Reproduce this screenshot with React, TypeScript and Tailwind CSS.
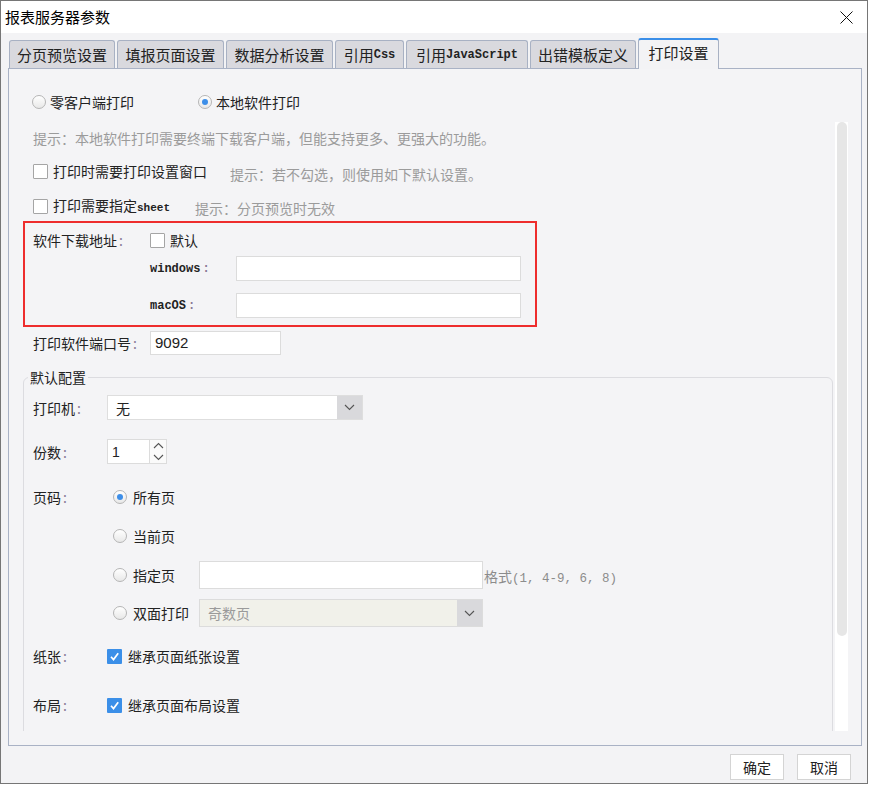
import React from "react";

const Radio = ({ on = false }: { on?: boolean }) => (
  <span className="flex h-[14px] w-[14px] shrink-0 items-center justify-center rounded-full border border-[#b5b5b5] bg-linear-to-b from-white to-[#e8e8e8]">
    {on && <span className="h-[6px] w-[6px] rounded-full bg-[#3d8ee8]" />}
  </span>
);

const Check = ({ on = false }: { on?: boolean }) =>
  on ? (
    <span className="flex h-[15px] w-[15px] shrink-0 items-center justify-center rounded-[1px] bg-[#3b8fe8]">
      <svg width="11" height="11" viewBox="0 0 11 11">
        <path d="M2 5.8 L4.5 8.6 L9.2 2.2" stroke="#fff" strokeWidth="1.7" fill="none" />
      </svg>
    </span>
  ) : (
    <span className="h-[15px] w-[15px] shrink-0 rounded-[1px] border border-[#a5a5a5] bg-white" />
  );

const Chevron = ({ up = false }: { up?: boolean }) => (
  <svg width="11" height="7" viewBox="0 0 11 7">
    <path d={up ? "M1 6 L5.5 1.5 L10 6" : "M1 1 L5.5 5.5 L10 1"} stroke="#555" strokeWidth="1.1" fill="none" />
  </svg>
);

const Colon = () => <span className="ml-[2px] text-[#8a7a96]">:</span>;

const mono = "font-['Liberation_Mono',monospace] font-bold";

export default function App() {
  return (
    <div className="min-h-screen bg-white">
      <div className="flex h-[784px] w-[868px] flex-col border border-[#767676] bg-[#f3f3f5] font-['Noto_Sans_CJK_SC',sans-serif] text-[#222]">
        {/* title bar */}
        <div className="flex h-[32px] shrink-0 items-center justify-between bg-white pl-[4px] pr-[14px]">
          <span className="text-[15px] leading-[20px] text-black">报表服务器参数</span>
          <svg width="13" height="13" viewBox="0 0 13 13">
            <path d="M0.5 0.5 L12.5 12.5 M12.5 0.5 L0.5 12.5" stroke="#111" strokeWidth="1" />
          </svg>
        </div>

        {/* tabs */}
        <div className="flex h-[35px] shrink-0 items-end gap-[2px] pl-[8px] text-[15px] leading-[20px]">
          <div className="flex h-[28px] w-[106px] items-center justify-center rounded-t-[3px] border border-b-0 border-[#a8b1c3] bg-[#d9d9de]">分页预览设置</div>
          <div className="flex h-[28px] w-[107px] items-center justify-center rounded-t-[3px] border border-b-0 border-[#a8b1c3] bg-[#d9d9de]">填报页面设置</div>
          <div className="flex h-[28px] w-[107px] items-center justify-center rounded-t-[3px] border border-b-0 border-[#a8b1c3] bg-[#d9d9de]">数据分析设置</div>
          <div className="flex h-[28px] w-[69px] items-center justify-center rounded-t-[3px] border border-b-0 border-[#a8b1c3] bg-[#d9d9de]">
            引用<span className={`${mono} text-[12px]`}>Css</span>
          </div>
          <div className="flex h-[28px] w-[122px] items-center justify-center rounded-t-[3px] border border-b-0 border-[#a8b1c3] bg-[#d9d9de]">
            引用<span className={`${mono} text-[12px]`}>JavaScript</span>
          </div>
          <div className="flex h-[28px] w-[106px] items-center justify-center rounded-t-[3px] border border-b-0 border-[#a8b1c3] bg-[#d9d9de]">出错模板定义</div>
          <div className="relative z-10 -mb-px flex h-[31px] w-[81px] items-center justify-center rounded-t-[3px] border-x border-t-2 border-x-[#a8b1c3] border-t-[#3a8ee8] bg-[#f3f3f5] pb-[3px]">打印设置</div>
        </div>

        {/* panel */}
        <div className="ml-[7px] h-[678px] w-[854px] shrink-0 border border-[#a9b2c5] bg-[#f4f4f6]">
          <div className="flex h-[662px]">
            <div className="h-full w-[826px] overflow-hidden pl-[14px] text-[14px] leading-[20px]">
              <div className="mt-[21px] flex h-[24px] items-center pl-[9px]">
                <div className="flex w-[166px] items-center gap-[4px]">
                  <Radio />
                  <span>零客户端打印</span>
                </div>
                <div className="flex items-center gap-[4px]">
                  <Radio on />
                  <span>本地软件打印</span>
                </div>
              </div>

              <div className="mt-[12px] flex h-[24px] items-center pl-[10px] text-[#9b9b9b]">
                提示：本地软件打印需要终端下载客户端，但能支持更多、更强大的功能。
              </div>

              <div className="mt-[9px] flex h-[24px] items-center pl-[10px]">
                <div className="flex w-[197px] items-center gap-[5px]">
                  <Check />
                  <span>打印时需要打印设置窗口</span>
                </div>
                <span className="mt-[6px] text-[#9b9b9b]">提示：若不勾选，则使用如下默认设置。</span>
              </div>

              <div className="mt-[11px] flex h-[24px] items-center pl-[10px]">
                <div className="flex w-[162px] items-center gap-[5px]">
                  <Check />
                  <span>
                    打印需要指定<span className={`${mono} text-[11px]`}>sheet</span>
                  </span>
                </div>
                <span className="mt-[4px] text-[#9b9b9b]">提示：分页预览时无效</span>
              </div>

              {/* download address */}
              <div className="mt-[3px] w-[514px] border-2 border-[#ee2d2d] pb-[7px] pl-[8px] pt-[5px]">
                <div className="flex h-[24px] items-center">
                  <span className="w-[117px]">
                    软件下载地址<Colon />
                  </span>
                  <Check />
                  <span className="ml-[5px]">默认</span>
                </div>
                <div className="mt-[4px] flex items-center pl-[117px]">
                  <span className={`w-[86px] ${mono} text-[12px]`}>
                    windows<Colon />
                  </span>
                  <div className="h-[25px] w-[285px] border border-[#dcdcdc] bg-white" />
                </div>
                <div className="mt-[12px] flex items-center pl-[117px]">
                  <span className={`w-[86px] ${mono} text-[12px]`}>
                    macOS<Colon />
                  </span>
                  <div className="h-[25px] w-[285px] border border-[#dcdcdc] bg-white" />
                </div>
              </div>

              <div className="mt-[4px] flex h-[24px] items-center pl-[10px]">
                <span className="w-[117px]">
                  打印软件端口号<Colon />
                </span>
                <div className="flex h-[24px] w-[131px] items-center border border-[#dcdcdc] bg-white pl-[4px] font-['Liberation_Sans',sans-serif] text-[15px]">
                  9092
                </div>
              </div>

              {/* default config */}
              <fieldset className="mt-[12px] h-[420px] w-[810px] rounded-t-[6px] border border-[#dcdce0]">
                <legend className="ml-[4px] px-[2px] leading-[20px]">默认配置</legend>
                <div className="pl-[9px] pt-[8px]">
                  <div className="flex h-[25px] items-center">
                    <span className="w-[74px]">
                      打印机<Colon />
                    </span>
                    <div className="flex h-[25px] w-[256px] border border-[#dedede] bg-white">
                      <span className="flex flex-1 items-center pl-[8px]">无</span>
                      <span className="flex w-[25px] items-center justify-center bg-[#d9d9dc]">
                        <Chevron />
                      </span>
                    </div>
                  </div>

                  <div className="mt-[19px] flex h-[25px] items-center">
                    <span className="w-[74px]">
                      份数<Colon />
                    </span>
                    <div className="flex h-[25px] w-[43px] items-center border border-[#dcdcdc] bg-white pl-[4px] font-['Liberation_Sans',sans-serif]">
                      1
                    </div>
                    <div className="flex h-[25px] w-[17px] flex-col border-y border-r border-[#dcdcdc] bg-[#fafafa]">
                      <span className="flex flex-1 items-center justify-center">
                        <Chevron up />
                      </span>
                      <span className="flex flex-1 items-center justify-center">
                        <Chevron />
                      </span>
                    </div>
                  </div>

                  <div className="mt-[19px] flex">
                    <span className="flex h-[28px] w-[74px] items-center">
                      页码<Colon />
                    </span>
                    <div className="pl-[6px]">
                      <div className="flex h-[28px] items-center gap-[6px]">
                        <Radio on />
                        <span>所有页</span>
                      </div>
                      <div className="mt-[11px] flex h-[28px] items-center gap-[6px]">
                        <Radio />
                        <span>当前页</span>
                      </div>
                      <div className="mt-[11px] flex h-[28px] items-center">
                        <div className="flex w-[86px] items-center gap-[6px]">
                          <Radio />
                          <span>指定页</span>
                        </div>
                        <div className="h-[28px] w-[284px] border border-[#dcdcdc] bg-white" />
                        <span className="mt-[4px] ml-[1px] text-[#8c8c8c]">
                          格式<span className="font-['Liberation_Mono',monospace] text-[12.5px]">(1, 4-9, 6, 8)</span>
                        </span>
                      </div>
                      <div className="mt-[10px] flex h-[28px] items-center">
                        <div className="flex w-[86px] items-center gap-[6px]">
                          <Radio />
                          <span>双面打印</span>
                        </div>
                        <div className="flex h-[28px] w-[284px] border border-[#dcdcdc] bg-[#f1f1ea]">
                          <span className="flex flex-1 items-center pl-[8px] text-[#9a9a9a]">奇数页</span>
                          <span className="flex w-[25px] items-center justify-center bg-[#d9d9dc]">
                            <Chevron />
                          </span>
                        </div>
                      </div>
                    </div>
                  </div>

                  <div className="mt-[17px] flex h-[24px] items-center">
                    <span className="w-[74px]">
                      纸张<Colon />
                    </span>
                    <Check on />
                    <span className="ml-[6px]">继承页面纸张设置</span>
                  </div>

                  <div className="mt-[25px] flex h-[24px] items-center">
                    <span className="w-[74px]">
                      布局<Colon />
                    </span>
                    <Check on />
                    <span className="ml-[6px]">继承页面布局设置</span>
                  </div>
                </div>
              </fieldset>
            </div>

            {/* scrollbar */}
            <div className="flex w-[13px] flex-col pt-[53px]">
              <div className="flex-1 bg-white pl-[2px]">
                <div className="h-[514px] w-[10px] rounded-full bg-[#e6e6e6]" />
              </div>
            </div>
          </div>
        </div>

        {/* buttons */}
        <div className="flex shrink-0 justify-end gap-[13px] pr-[16px] pt-[8px] text-[14px]">
          <button className="h-[26px] w-[54px] border border-[#d4d4d4] bg-white">确定</button>
          <button className="h-[26px] w-[54px] border border-[#d4d4d4] bg-white">取消</button>
        </div>
      </div>
    </div>
  );
}
